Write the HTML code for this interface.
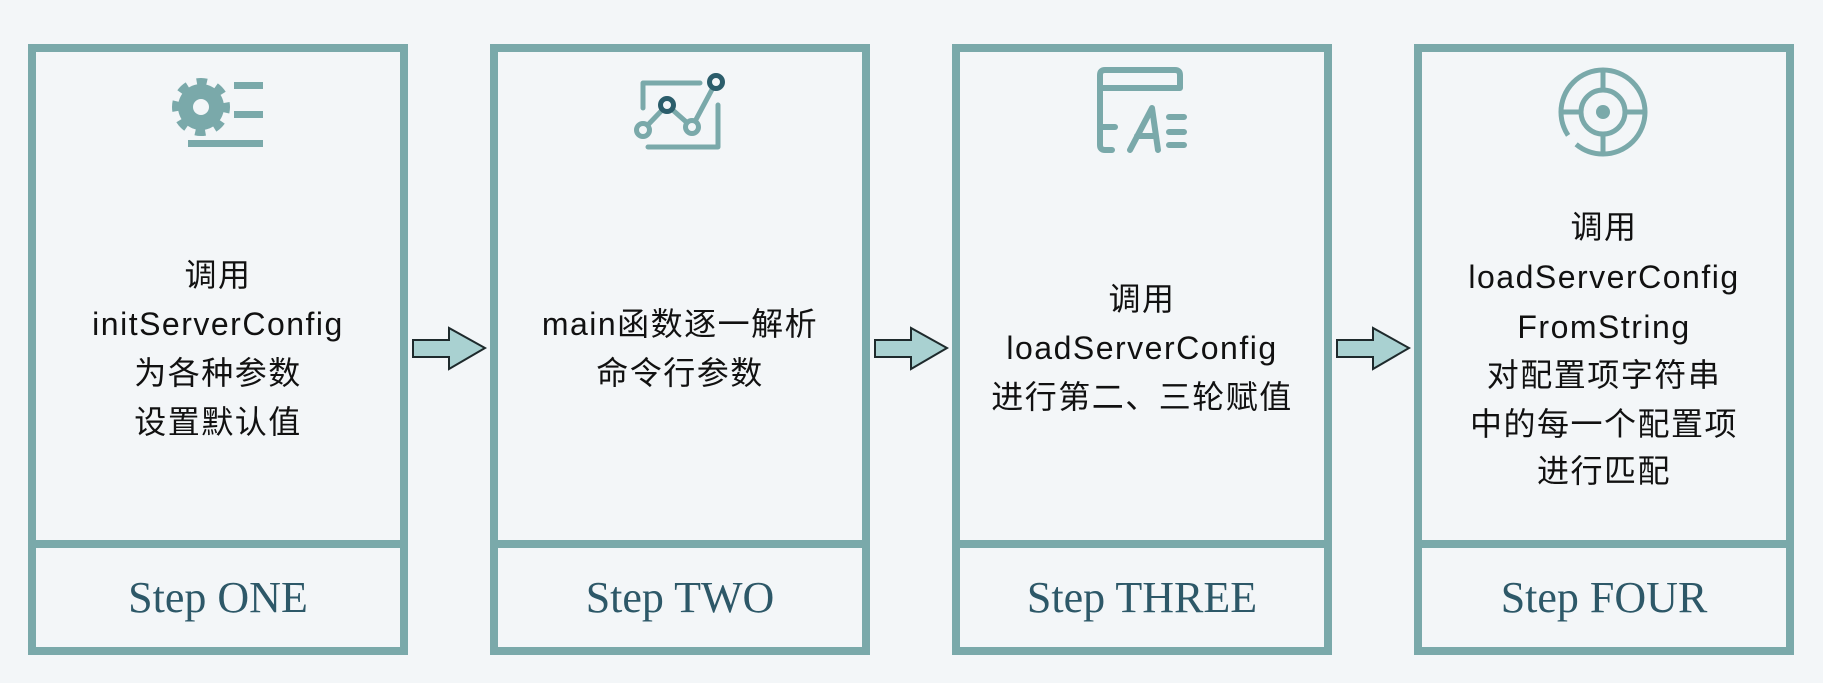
<!DOCTYPE html>
<html><head><meta charset="utf-8"><style>
html,body{margin:0;padding:0;background:#f3f6f8;width:1823px;height:683px;overflow:hidden}
svg{display:block}
.t{font-family:"Liberation Sans","Noto Sans CJK SC",sans-serif;font-size:32px;letter-spacing:1.5px;fill:#111}
.s{font-family:"Liberation Serif",serif;font-size:44px;fill:#2d5868}
</style></head><body>
<svg width="1823" height="683" viewBox="0 0 1823 683" xmlns="http://www.w3.org/2000/svg">
<rect width="1823" height="683" fill="#f3f6f8"/>
<g fill="none" stroke="#7aa9aa" stroke-width="8">
<rect x="32" y="48" width="372" height="603"/><line x1="32" y1="544" x2="404" y2="544"/>
<rect x="494" y="48" width="372" height="603"/><line x1="494" y1="544" x2="866" y2="544"/>
<rect x="956" y="48" width="372" height="603"/><line x1="956" y1="544" x2="1328" y2="544"/>
<rect x="1418" y="48" width="372" height="603"/><line x1="1418" y1="544" x2="1790" y2="544"/>
</g>
<g fill="#a9d1d1" stroke="#1e2a2c" stroke-width="2" stroke-linejoin="miter">
<path d="M413 340H449V328L485 348L449 369V357H413Z"/>
<path d="M875 340H911V328L947 348L911 369V357H875Z"/>
<path d="M1337 340H1373V328L1409 348L1373 369V357H1337Z"/>
</g>
<g fill="#7aa9aa">
<circle cx="201" cy="107" r="23"/>
<circle cx="201" cy="107" r="25" fill="none" stroke="#7aa9aa" stroke-width="8" stroke-dasharray="10 9.63" transform="rotate(-10 201 107)"/>
<circle cx="201" cy="107" r="8" fill="#f3f6f8"/>
<rect x="234" y="82" width="29" height="7"/>
<rect x="234" y="111" width="29" height="7"/>
<rect x="188" y="140" width="75" height="7"/>
</g>
<g fill="none" stroke="#7aa9aa" stroke-width="5" stroke-linecap="round" stroke-linejoin="round">
<path d="M643 108V83H700"/>
<path d="M718 105V147H648"/>
<path d="M643 130L667 105L692 127L716 82"/>
<circle cx="643" cy="130" r="6.5" fill="#f3f6f8"/>
<circle cx="692" cy="127" r="6.5" fill="#f3f6f8"/>
<circle cx="667" cy="105" r="6.5" fill="#f3f6f8" stroke="#2b5d6b"/>
<circle cx="716" cy="82" r="6.5" fill="#f3f6f8" stroke="#2b5d6b"/>
</g>
<g fill="none" stroke="#7aa9aa" stroke-width="6" stroke-linecap="round" stroke-linejoin="round">
<path d="M1112 150H1105Q1100 150 1100 145V75Q1100 70 1105 70H1175Q1180 70 1180 75V88H1101"/>
<path d="M1101 127H1115"/>
<path d="M1130 150L1152 108L1158 150M1137 136H1156"/>
<path d="M1169 117H1184M1169 132H1184M1169 145H1184"/>
</g>
<g fill="none" stroke="#7aa9aa" stroke-width="5">
<circle cx="1603" cy="112" r="42" stroke-dasharray="95 12 160"/>
<circle cx="1603" cy="112" r="22"/>
<path d="M1603 70V90M1603 134V154M1561 112H1581M1625 112H1645"/>
<circle cx="1603" cy="112" r="7" fill="#7aa9aa" stroke="none"/>
</g>
<g class="t" text-anchor="middle" dominant-baseline="central">
<text x="218" y="275">调用</text>
<text x="218" y="324">initServerConfig</text>
<text x="218" y="373">为各种参数</text>
<text x="218" y="422">设置默认值</text>
<text x="680" y="324">main函数逐一解析</text>
<text x="680" y="373">命令行参数</text>
<text x="1142" y="299">调用</text>
<text x="1142" y="348">loadServerConfig</text>
<text x="1142" y="397">进行第二、三轮赋值</text>
<text x="1604" y="227">调用</text>
<text x="1604" y="277">loadServerConfig</text>
<text x="1604" y="327">FromString</text>
<text x="1604" y="375">对配置项字符串</text>
<text x="1604" y="424">中的每一个配置项</text>
<text x="1604" y="471">进行匹配</text>
</g>
<g class="s" text-anchor="middle">
<text x="218" y="612">Step ONE</text>
<text x="680" y="612">Step TWO</text>
<text x="1142" y="612">Step THREE</text>
<text x="1604" y="612">Step FOUR</text>
</g>
</svg>
</body></html>
